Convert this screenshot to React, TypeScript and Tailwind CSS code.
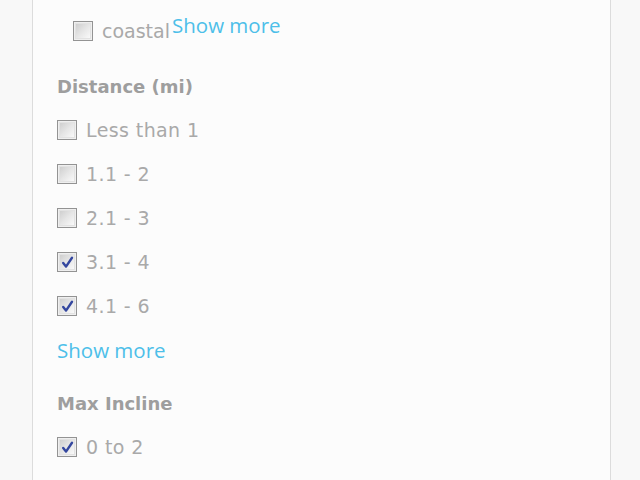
import React from 'react';

type Option = { label: string; checked?: boolean };

const distanceOptions: Option[] = [
  { label: 'Less than 1' },
  { label: '1.1 - 2' },
  { label: '2.1 - 3' },
  { label: '3.1 - 4', checked: true },
  { label: '4.1 - 6', checked: true },
];

function Box({ checked }: { checked?: boolean }) {
  return (
    <span className="w-[20px] h-[20px] shrink-0 border border-[#939393] bg-[#efefef] p-[1px]">
      <span className="flex w-full h-full items-center justify-center border border-[#e2e2e2] bg-gradient-to-br from-[#cfcfcf] via-[#e6e6e6] to-[#f9f9f9]">
        {checked && (
          <svg width="13" height="13" viewBox="0 0 13 13">
            <path d="M2.2 7 L5 10.6 L11 1.8" fill="none" stroke="#34479f" strokeWidth="2.4" strokeLinecap="round" strokeLinejoin="round" />
          </svg>
        )}
      </span>
    </span>
  );
}

function Row({ label, checked }: Option) {
  return (
    <label className="h-[44px] flex items-center gap-[9px] cursor-pointer">
      <Box checked={checked} />
      <span className="text-[19px] leading-none tracking-[0.4px] text-[#a9a9a9] font-['DejaVu_Sans',sans-serif]">{label}</span>
    </label>
  );
}

function Heading({ children }: { children: React.ReactNode }) {
  return (
    <h3 className="h-[44px] flex items-center text-[18px] font-bold text-[#9e9e9e] font-['DejaVu_Sans',sans-serif]">
      {children}
    </h3>
  );
}

function ShowMore() {
  return (
    <a href="#" className="text-[20.5px] leading-none text-[#4dbfe9] font-['Open_Sans',sans-serif] hover:underline">
      Show more
    </a>
  );
}

export default function App() {
  return (
    <div className="w-full h-[480px] overflow-hidden bg-[#f8f8f8]">
      <div className="ml-[32px] w-[579px] h-full border-x border-[#dcdcdc] bg-[#fcfcfc] pl-[24px] pt-[9px]">
        {/* Tail of the previous filter group */}
        <div className="h-[44px] pl-[16px] flex items-center">
          <Box />
          <span className="ml-[9px] text-[19px] leading-none text-[#a9a9a9] font-['DejaVu_Sans',sans-serif]">coastal</span>
          <span className="-mt-[8px] ml-[2px]">
            <ShowMore />
          </span>
        </div>

        <div className="mt-[11px]">
          <Heading>Distance (mi)</Heading>
          {distanceOptions.map((o) => (
            <Row key={o.label} {...o} />
          ))}
          <div className="h-[44px] flex items-center">
            <ShowMore />
          </div>
        </div>

        <div className="mt-[9px]">
          <Heading>Max Incline</Heading>
          <Row label="0 to 2" checked />
          <div className="h-[44px] flex items-center">
            <Box />
          </div>
        </div>
      </div>
    </div>
  );
}
